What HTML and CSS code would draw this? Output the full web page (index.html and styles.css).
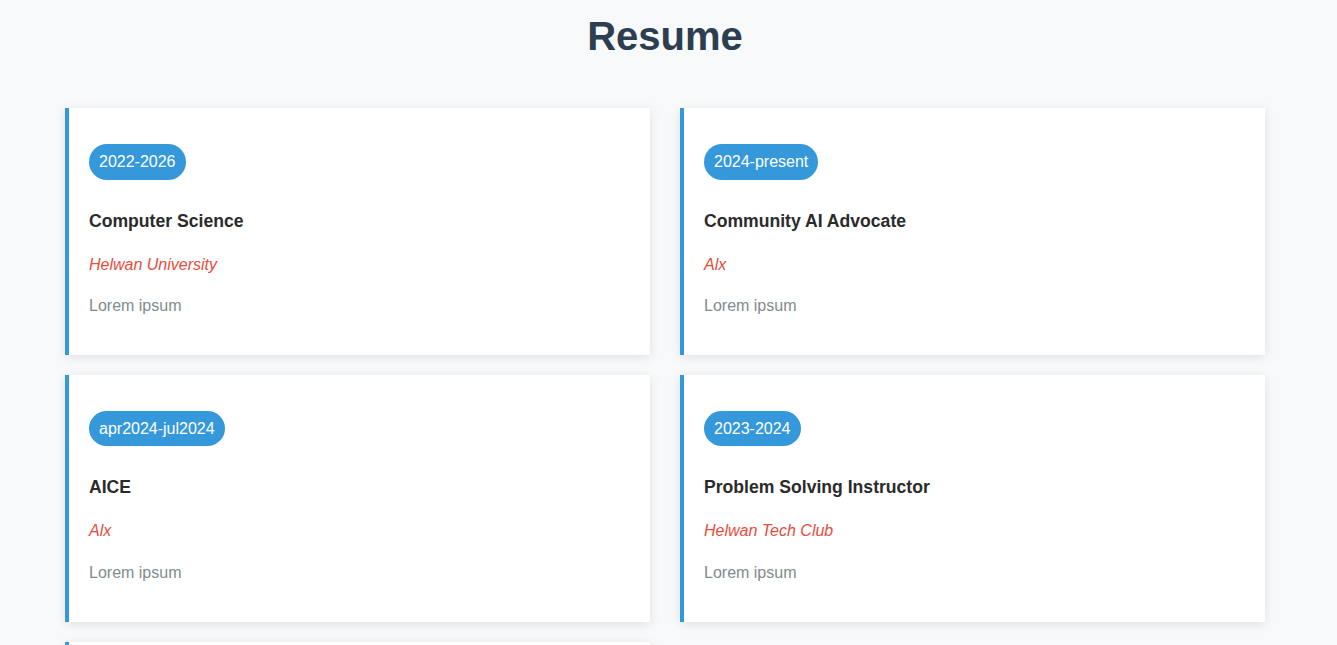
FILE: index.html
```html
<!DOCTYPE html>
<html lang="en">
<head>
<meta charset="utf-8">
<title>Resume</title>
<link rel="stylesheet" href="styles.css">
</head>
<body>
<main class="page">
  <h1 class="page-title">Resume</h1>
  <section class="timeline">
    <article class="card">
      <span class="badge">2022-2026</span>
      <h3 class="card-title">Computer Science</h3>
      <p class="org">Helwan University</p>
      <p class="desc">Lorem ipsum</p>
    </article>
    <article class="card">
      <span class="badge">2024-present</span>
      <h3 class="card-title">Community AI Advocate</h3>
      <p class="org">Alx</p>
      <p class="desc">Lorem ipsum</p>
    </article>
    <article class="card">
      <span class="badge">apr2024-jul2024</span>
      <h3 class="card-title">AICE</h3>
      <p class="org">Alx</p>
      <p class="desc">Lorem ipsum</p>
    </article>
    <article class="card">
      <span class="badge">2023-2024</span>
      <h3 class="card-title">Problem Solving Instructor</h3>
      <p class="org">Helwan Tech Club</p>
      <p class="desc">Lorem ipsum</p>
    </article>
    <article class="card">
      <span class="badge">2023</span>
      <h3 class="card-title">Volunteer</h3>
      <p class="org">Helwan University</p>
      <p class="desc">Lorem ipsum</p>
    </article>
  </section>
</main>
</body>
</html>
```
FILE: styles.css
```css
html, body {
  margin: 0;
  padding: 0;
}
body {
  background: #f7f9fb;
  font-family: "Liberation Sans", Arial, sans-serif;
  color: #333;
}
.page {
  width: 1200px;
  margin-left: 65px;
  padding-bottom: 40px;
}
.page-title {
  margin: 13px 0 49px;
  font-size: 40px;
  line-height: 46px;
  font-weight: 700;
  color: #2c3e50;
  text-align: center;
}
.timeline {
  display: grid;
  grid-template-columns: 1fr 1fr;
  gap: 20px 30px;
}
.card {
  display: flex;
  flex-direction: column;
  align-items: flex-start;
  background: #fff;
  border-left: 4px solid #3498db;
  padding: 36px 20px 36px;
  box-shadow: 0 2px 10px rgba(0, 0, 0, 0.1);
}
.badge {
  display: inline-block;
  background: #3498db;
  color: #fff;
  font-size: 16px;
  line-height: 25.6px;
  padding: 5px 10px;
  border-radius: 20px;
  margin-bottom: 27px;
}
.card-title {
  margin: 0 0 17px;
  font-size: 17.6px;
  line-height: 28px;
  font-weight: 700;
  color: #2b2b2b;
}
.org {
  margin: 0 0 16px;
  font-size: 16px;
  line-height: 25.6px;
  font-style: italic;
  color: #e74c3c;
}
.desc {
  margin: 0;
  font-size: 16px;
  line-height: 25.6px;
  color: #7f8c8d;
}
```
